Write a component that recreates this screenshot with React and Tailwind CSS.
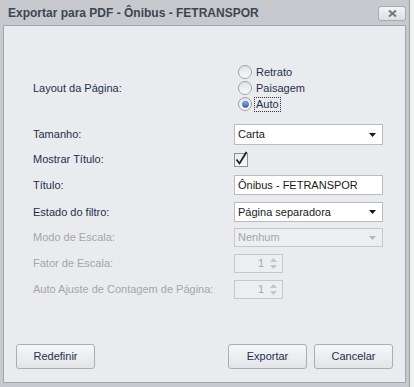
const font = { fontFamily: '"Liberation Sans", Arial, sans-serif' };

const Label = ({ children, disabled }) => (
  <div className={`w-[201px] shrink-0 text-[11px] ${disabled ? "text-[#a3a6ab]" : "text-[#1e2f4c]"}`}>{children}</div>
);

const Radio = ({ label, checked }) => (
  <div className="h-[16px] flex items-center">
    <span className="relative w-[14px] h-[14px] ml-[4px] rounded-full border border-[#9ea3aa] bg-gradient-to-b from-[#dfe1e5] to-[#fbfbfc] flex items-center justify-center">
      {checked && <span className="w-[7px] h-[7px] rounded-full bg-gradient-to-b from-[#8fb4ec] to-[#2f5fb8] border border-[#3f67ad]" />}
    </span>
    <span className={`ml-[3px] text-[11px] text-[#1e2f4c] leading-[13px] px-[1px] ${checked ? "outline outline-1 outline-dotted outline-[#333]" : ""}`}>{label}</span>
  </div>
);

const Arrow = ({ disabled }) => (
  <svg width="7" height="4" viewBox="0 0 7 4" className="mr-[6px]">
    <path d="M0 0h7L3.5 4z" fill={disabled ? "#b5b8bd" : "#1a1a1a"} />
  </svg>
);

const Combo = ({ value, disabled, h = "h-[21px]" }) => (
  <div className={`w-[149px] ${h} flex items-center justify-between border ${disabled ? "border-[#c5c8cd] bg-[#eceef1] text-[#a3a6ab]" : "border-[#b8bcc3] bg-white text-[#1a1a1a]"} text-[11px] pl-[3px]`}>
    <span>{value}</span>
    <Arrow disabled={disabled} />
  </div>
);

const Spin = () => (
  <div className="w-[49px] h-[19px] flex items-center justify-end border border-[#c5c8cd] bg-[#eceef1] text-[11px] text-[#a3a6ab]">
    <span className="mr-[6px]">1</span>
    <div className="flex flex-col gap-[3px] mr-[5px]">
      <svg width="7" height="4" viewBox="0 0 7 4"><path d="M0 4h7L3.5 0z" fill="#c3c6cb" /></svg>
      <svg width="7" height="4" viewBox="0 0 7 4"><path d="M0 0h7L3.5 4z" fill="#c3c6cb" /></svg>
    </div>
  </div>
);

const Button = ({ children }) => (
  <button className="w-[79px] h-[25px] rounded-[3px] border border-[#a9adb4] bg-gradient-to-b from-[#f6f7f9] to-[#e2e4e8] text-[11px] text-[#1e2f4c]">
    {children}
  </button>
);

export default function App() {
  return (
    <div className="w-[414px] h-[387px] bg-[#f2f2f2] flex" style={font}>
      <div className="w-[410px] h-[387px] bg-[#c7c9ce] flex flex-col px-[3px] pb-[4px] border-r border-[#9da0a6]">
        <div className="h-[25px] flex items-center justify-between shrink-0">
          <span className="ml-[5px] text-[12px] font-bold text-[#3e4650]">Exportar para PDF - Ônibus - FETRANSPOR</span>
          <div className="w-[28px] h-[15px] mr-[0px] mt-[1px] rounded-[3px] border border-[#a8abb1] bg-gradient-to-b from-[#f3f4f6] to-[#dcdee2] flex items-center justify-center">
            <svg width="9" height="7" viewBox="0 0 9 7">
              <path d="M1 0.5l7 6M8 0.5l-7 6" stroke="#73777e" strokeWidth="2" />
            </svg>
          </div>
        </div>
        <div className="flex-1 bg-[#eaebef] border border-[#a3a6ac] flex flex-col">
          <div className="pl-[29px] pt-[38px] flex flex-col">
            <div className="flex items-center">
              <Label>Layout da Página:</Label>
              <div className="flex flex-col">
                <Radio label="Retrato" />
                <Radio label="Paisagem" />
                <Radio label="Auto" checked />
              </div>
            </div>
            <div className="flex items-center mt-[12px]">
              <Label>Tamanho:</Label>
              <Combo value="Carta" />
            </div>
            <div className="flex items-center mt-[6px] h-[17px]">
              <Label>Mostrar Título:</Label>
              <div className="relative w-[14px] h-[14px] border border-[#8d9299] bg-gradient-to-b from-[#e8eaed] to-[#fafafa]">
                <svg width="14" height="15" viewBox="0 0 14 15" className="absolute left-[-1px] top-[-3px]">
                  <path d="M2.5 8.5L5.5 12.5L12.5 1" stroke="#222" strokeWidth="1.8" fill="none" />
                </svg>
              </div>
            </div>
            <div className="flex items-center mt-[7px]">
              <Label>Título:</Label>
              <div className="w-[149px] h-[20px] flex items-center border border-[#b8bcc3] bg-white text-[11px] text-[#1a1a1a] pl-[3px]">Ônibus - FETRANSPOR</div>
            </div>
            <div className="flex items-center mt-[7px]">
              <Label>Estado do filtro:</Label>
              <Combo value="Página separadora" h="h-[20px]" />
            </div>
            <div className="flex items-center mt-[6px]">
              <Label disabled>Modo de Escala:</Label>
              <Combo value="Nenhum" disabled h="h-[19px]" />
            </div>
            <div className="flex items-center mt-[7px]">
              <Label disabled>Fator de Escala:</Label>
              <Spin />
            </div>
            <div className="flex items-center mt-[7px]">
              <Label disabled>Auto Ajuste de Contagem de Página:</Label>
              <Spin />
            </div>
          </div>
          <div className="flex-1" />
          <div className="flex items-center px-[12px] pb-[13px]">
            <Button>Redefinir</Button>
            <div className="flex-1" />
            <Button>Exportar</Button>
            <div className="w-[7px]" />
            <Button>Cancelar</Button>
          </div>
        </div>
      </div>
    </div>
  );
}
